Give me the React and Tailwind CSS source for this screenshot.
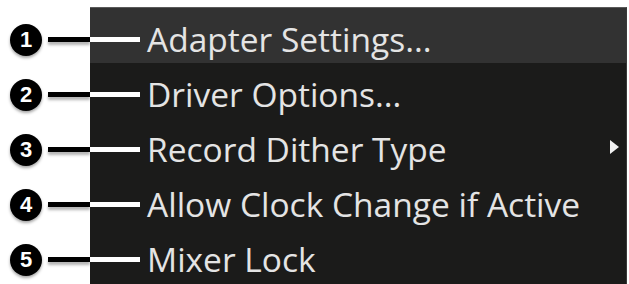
import React from 'react';

const items = [
  { n: 1, label: 'Adapter Settings...', active: true },
  { n: 2, label: 'Driver Options...' },
  { n: 3, label: 'Record Dither Type', sub: true },
  { n: 4, label: 'Allow Clock Change if Active' },
  { n: 5, label: 'Mixer Lock' },
];

const App = () => {
  return (
    <div className="w-[629px] h-[284px] bg-white flex overflow-hidden" style={{ fontFamily: '"Open Sans", sans-serif' }}>
      {/* callout numbers */}
      <div className="w-[90px] shrink-0 pt-[8px] flex flex-col">
        {items.map((it) => (
          <div key={it.n} className="h-[55px] pt-[8px] flex items-center">
            <div className="ml-[10px] w-[32px] h-[32px] rounded-full bg-black text-white flex items-center justify-center text-[22px] font-bold leading-none shadow-[0_2px_3px_rgba(0,0,0,0.35)]" style={{ fontFamily: '"Liberation Sans", sans-serif' }}>
              {it.n}
            </div>
            <div className="ml-[6px] flex-1 h-[5px] bg-black shadow-[0_3px_3px_rgba(0,0,0,0.3)]" />
          </div>
        ))}
      </div>

      {/* menu panel */}
      <div className="w-[537px] mt-[7px] bg-[#1b1b1a] border-t border-[#5a5a5a] border-r border-r-[#3a3a3a] flex flex-col">
        {items.map((it) => (
          <div
            key={it.n}
            className={`h-[55px] shrink-0 pt-[8px] flex items-center ${it.active ? 'bg-[#323232]' : ''}`}
          >
            <div className="w-[50px] h-[5px] bg-white" />
            <span className="ml-[7px] text-[33.5px] leading-none text-[#e4e4e4] whitespace-nowrap">{it.label}</span>
            {it.sub && (
              <svg className="ml-auto mr-[6px] -mt-[6px]" width="11" height="16" viewBox="0 0 11 16">
                <path d="M1 1 L10 8 L1 15 Z" fill="#f2f2f2" />
              </svg>
            )}
          </div>
        ))}
      </div>
    </div>
  );
};

export default App;
